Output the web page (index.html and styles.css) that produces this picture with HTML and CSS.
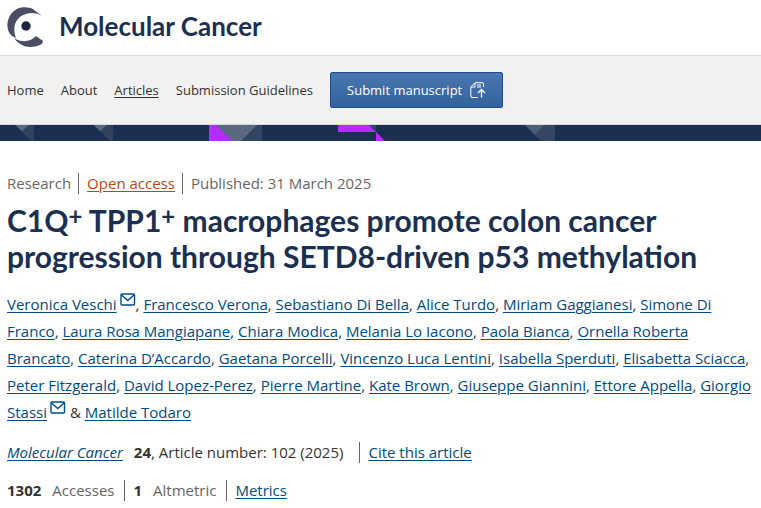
FILE: index.html
```html
<!DOCTYPE html>
<html lang="en">
<head>
    <meta charset="UTF-8">
    <meta name="viewport" content="width=device-width, initial-scale=1.0">
    <title>Molecular Cancer</title>
    <link rel="stylesheet" href="styles.css">
</head>
<body>
    <svg class="symbols" aria-hidden="true">
        <symbol id="icon-mail" viewBox="0 0 16 13">
            <rect x="1" y="1" width="13.5" height="11" rx="1" fill="none" stroke="currentColor" stroke-width="1.4"/>
            <path d="M1.5 2 L7.75 7.5 L14 2" fill="none" stroke="currentColor" stroke-width="1.4"/>
        </symbol>
    </svg>

    <header class="header">
        <svg class="logo" viewBox="0 0 36 40" aria-hidden="true">
            <path fill="#494e62" d="M35 9 L27 3 L26 2 C20 -1 10 -1 4 7 C-1 14 -1 24 5 29 L9 31 C5 21 8 10 19 7 C25 5 30 6 35 9 Z"/>
            <path fill="#494e62" d="M7 31 C15 36 23 35 29 29 L36 34 L35 37 C25 42 14 41 7 31 Z"/>
            <circle fill="#1b253b" cx="19" cy="19" r="4.7"/>
        </svg>
        <span class="journal-title">Molecular Cancer</span>
    </header>

    <nav class="nav">
        <a class="nav-link" href="#">Home</a>
        <a class="nav-link" href="#">About</a>
        <a class="nav-link active" href="#">Articles</a>
        <a class="nav-link" href="#">Submission Guidelines</a>
        <a class="submit" href="#">Submit manuscript
            <svg class="submit-icon" viewBox="0 0 16 16" aria-hidden="true" fill="none" stroke="currentColor">
                <path d="M7.5 15.5 H2 Q.8 15.5 .8 14 V5 L5 .7 H12 Q13.5 .7 13.5 2 V5 M1 5 H5 V1 M7 3 H11 M7 5 H11"/>
                <path d="M11.5 15.5 V8 M8 11 L11.5 7.5 L15 11" stroke-width="1.3"/>
            </svg>
        </a>
    </nav>

    <div class="banner">
        <svg class="banner-art" width="600" height="16" viewBox="0 0 600 16" aria-hidden="true">
            <path fill="#31425f" d="M15 0 H34 V16 H31 Z M94 0 H113 V16 H110 Z"/>
            <path fill="#5c6781" d="M15 0 H29 L22 6 Z M94 0 H107 L100 6 Z"/>
            <path fill="#324563" d="M216 0 H262 V16 H232 Z"/>
            <path fill="#5c6781" d="M216 0 H257 L241 16 H231 Z"/>
            <path fill="#b52cff" d="M209 0 H216 L232 16 H209 Z"/>
            <path fill="#324563" d="M369 0 H376 V7 Z"/>
            <path fill="#b52cff" d="M338 0 H369 L385 16 H376 V7 H338 Z"/>
            <path fill="#344664" d="M525 0 H555 V16 H541 Z"/>
            <path fill="#4f5d77" d="M525 0 H544 L535 10 Z"/>
        </svg>
    </div>

    <main class="article">
        <ul class="details">
            <li>Research</li>
            <li><a class="open-access" href="#">Open access</a></li>
            <li>Published: 31 March 2025</li>
        </ul>

        <h1 class="title">C1Q<sup>+</sup> TPP1<sup>+</sup> macrophages promote colon cancer progression through SETD8-driven p53 methylation</h1>

        <p class="authors">
            <a href="#">Veronica Veschi</a><svg class="mail"><use href="#icon-mail"/></svg>,
            <a href="#">Francesco Verona</a>,
            <a href="#">Sebastiano Di Bella</a>,
            <a href="#">Alice Turdo</a>,
            <a href="#">Miriam Gaggianesi</a>,
            <a href="#">Simone Di Franco</a>,
            <a href="#">Laura Rosa Mangiapane</a>,
            <a href="#">Chiara Modica</a>,
            <a href="#">Melania Lo Iacono</a>,
            <a href="#">Paola Bianca</a>,
            <a href="#">Ornella Roberta Brancato</a>,
            <a href="#">Caterina D’Accardo</a>,
            <a href="#">Gaetana Porcelli</a>,
            <a href="#">Vincenzo Luca Lentini</a>,
            <a href="#">Isabella Sperduti</a>,
            <a href="#">Elisabetta Sciacca</a>,
            <a href="#">Peter Fitzgerald</a>,
            <a href="#">David Lopez-Perez</a>,
            <a href="#">Pierre Martine</a>,
            <a href="#">Kate Brown</a>,
            <a href="#">Giuseppe Giannini</a>,
            <a href="#">Ettore Appella</a>,
            <a href="#">Giorgio Stassi</a><svg class="mail"><use href="#icon-mail"/></svg>
            &amp; <a href="#">Matilde Todaro</a>
        </p>

        <div class="citation">
            <p class="volume"><a class="journal-link" href="#">Molecular Cancer</a> <b>24</b>, Article number: 102 (2025)</p>
            <a class="cite" href="#">Cite this article</a>
        </div>

        <ul class="details metrics">
            <li><b>1302</b>Accesses</li>
            <li><b>1</b>Altmetric</li>
            <li><a href="#">Metrics</a></li>
        </ul>
    </main>
</body>
</html>
```

FILE: styles.css
```css
* {
    box-sizing: border-box;
}

body {
    margin: 0;
    background: #fff;
    color: #333;
    font-family: "Open Sans", "Noto Sans", sans-serif;
    font-size: 15px;
    line-height: 27px;
}

a {
    color: #004b83;
    text-underline-offset: 2px;
}

.symbols {
    display: none;
}

.header {
    display: flex;
    align-items: center;
    gap: 16px;
    height: 56px;
    padding: 0 7px 2px;
    border-bottom: 1px solid #d9d9d9;
}

.logo {
    width: 36px;
    height: 40px;
}

.journal-title {
    color: #1b3051;
    font-family: Lato, sans-serif;
    font-size: 26px;
    font-weight: bold;
}

.nav {
    display: flex;
    align-items: center;
    gap: 17px;
    padding: 16px 7px;
    border-bottom: 1px solid #d9d9d9;
    background: #f1f1f1;
    font-size: 13px;
    line-height: 20px;
}

.nav-link {
    color: #333;
    text-decoration: none;
}

.nav-link.active {
    text-decoration: underline;
}

.submit {
    display: flex;
    align-items: center;
    gap: 8px;
    padding: 7px 16px;
    border: 1px solid #1b4f93;
    border-radius: 2px;
    background: linear-gradient(#4a76ae, #33629e);
    color: #fff;
    text-decoration: none;
}

.submit-icon {
    width: 16px;
    height: 16px;
}

.banner {
    height: 16px;
    overflow: hidden;
    background: #1b3051;
}

.banner-art {
    display: block;
}

.article {
    padding: 32px 5px 0 7px;
}

.details {
    display: flex;
    margin: 0;
    padding: 0;
    list-style: none;
    color: #666;
    line-height: 21px;
}

.details li + li {
    margin-left: 7px;
    padding-left: 8px;
    border-left: 1px solid #666;
}

.open-access {
    color: #b74616;
}

.title {
    margin: 8px 0 17px;
    color: #1b3051;
    font-family: Lato, sans-serif;
    font-size: 30px;
    line-height: 36px;
}

.title sup {
    font-size: 24px;
    line-height: 0;
    vertical-align: 7px;
}

.authors {
    margin: 0;
}

.mail {
    width: 16px;
    height: 13px;
    margin-left: 3px;
    color: #004b83;
    vertical-align: 4px;
}

.citation {
    display: flex;
    margin: 16px 0 17px;
    line-height: 21px;
}

.volume {
    margin: 0;
}

.journal-link {
    margin-right: 7px;
    font-style: italic;
}

.cite {
    margin-left: 16px;
    padding-left: 8px;
    border-left: 1px solid #666;
}

.metrics b {
    margin-right: 11px;
    color: #333;
}

.metrics li + li {
    margin-left: 10px;
}
```
